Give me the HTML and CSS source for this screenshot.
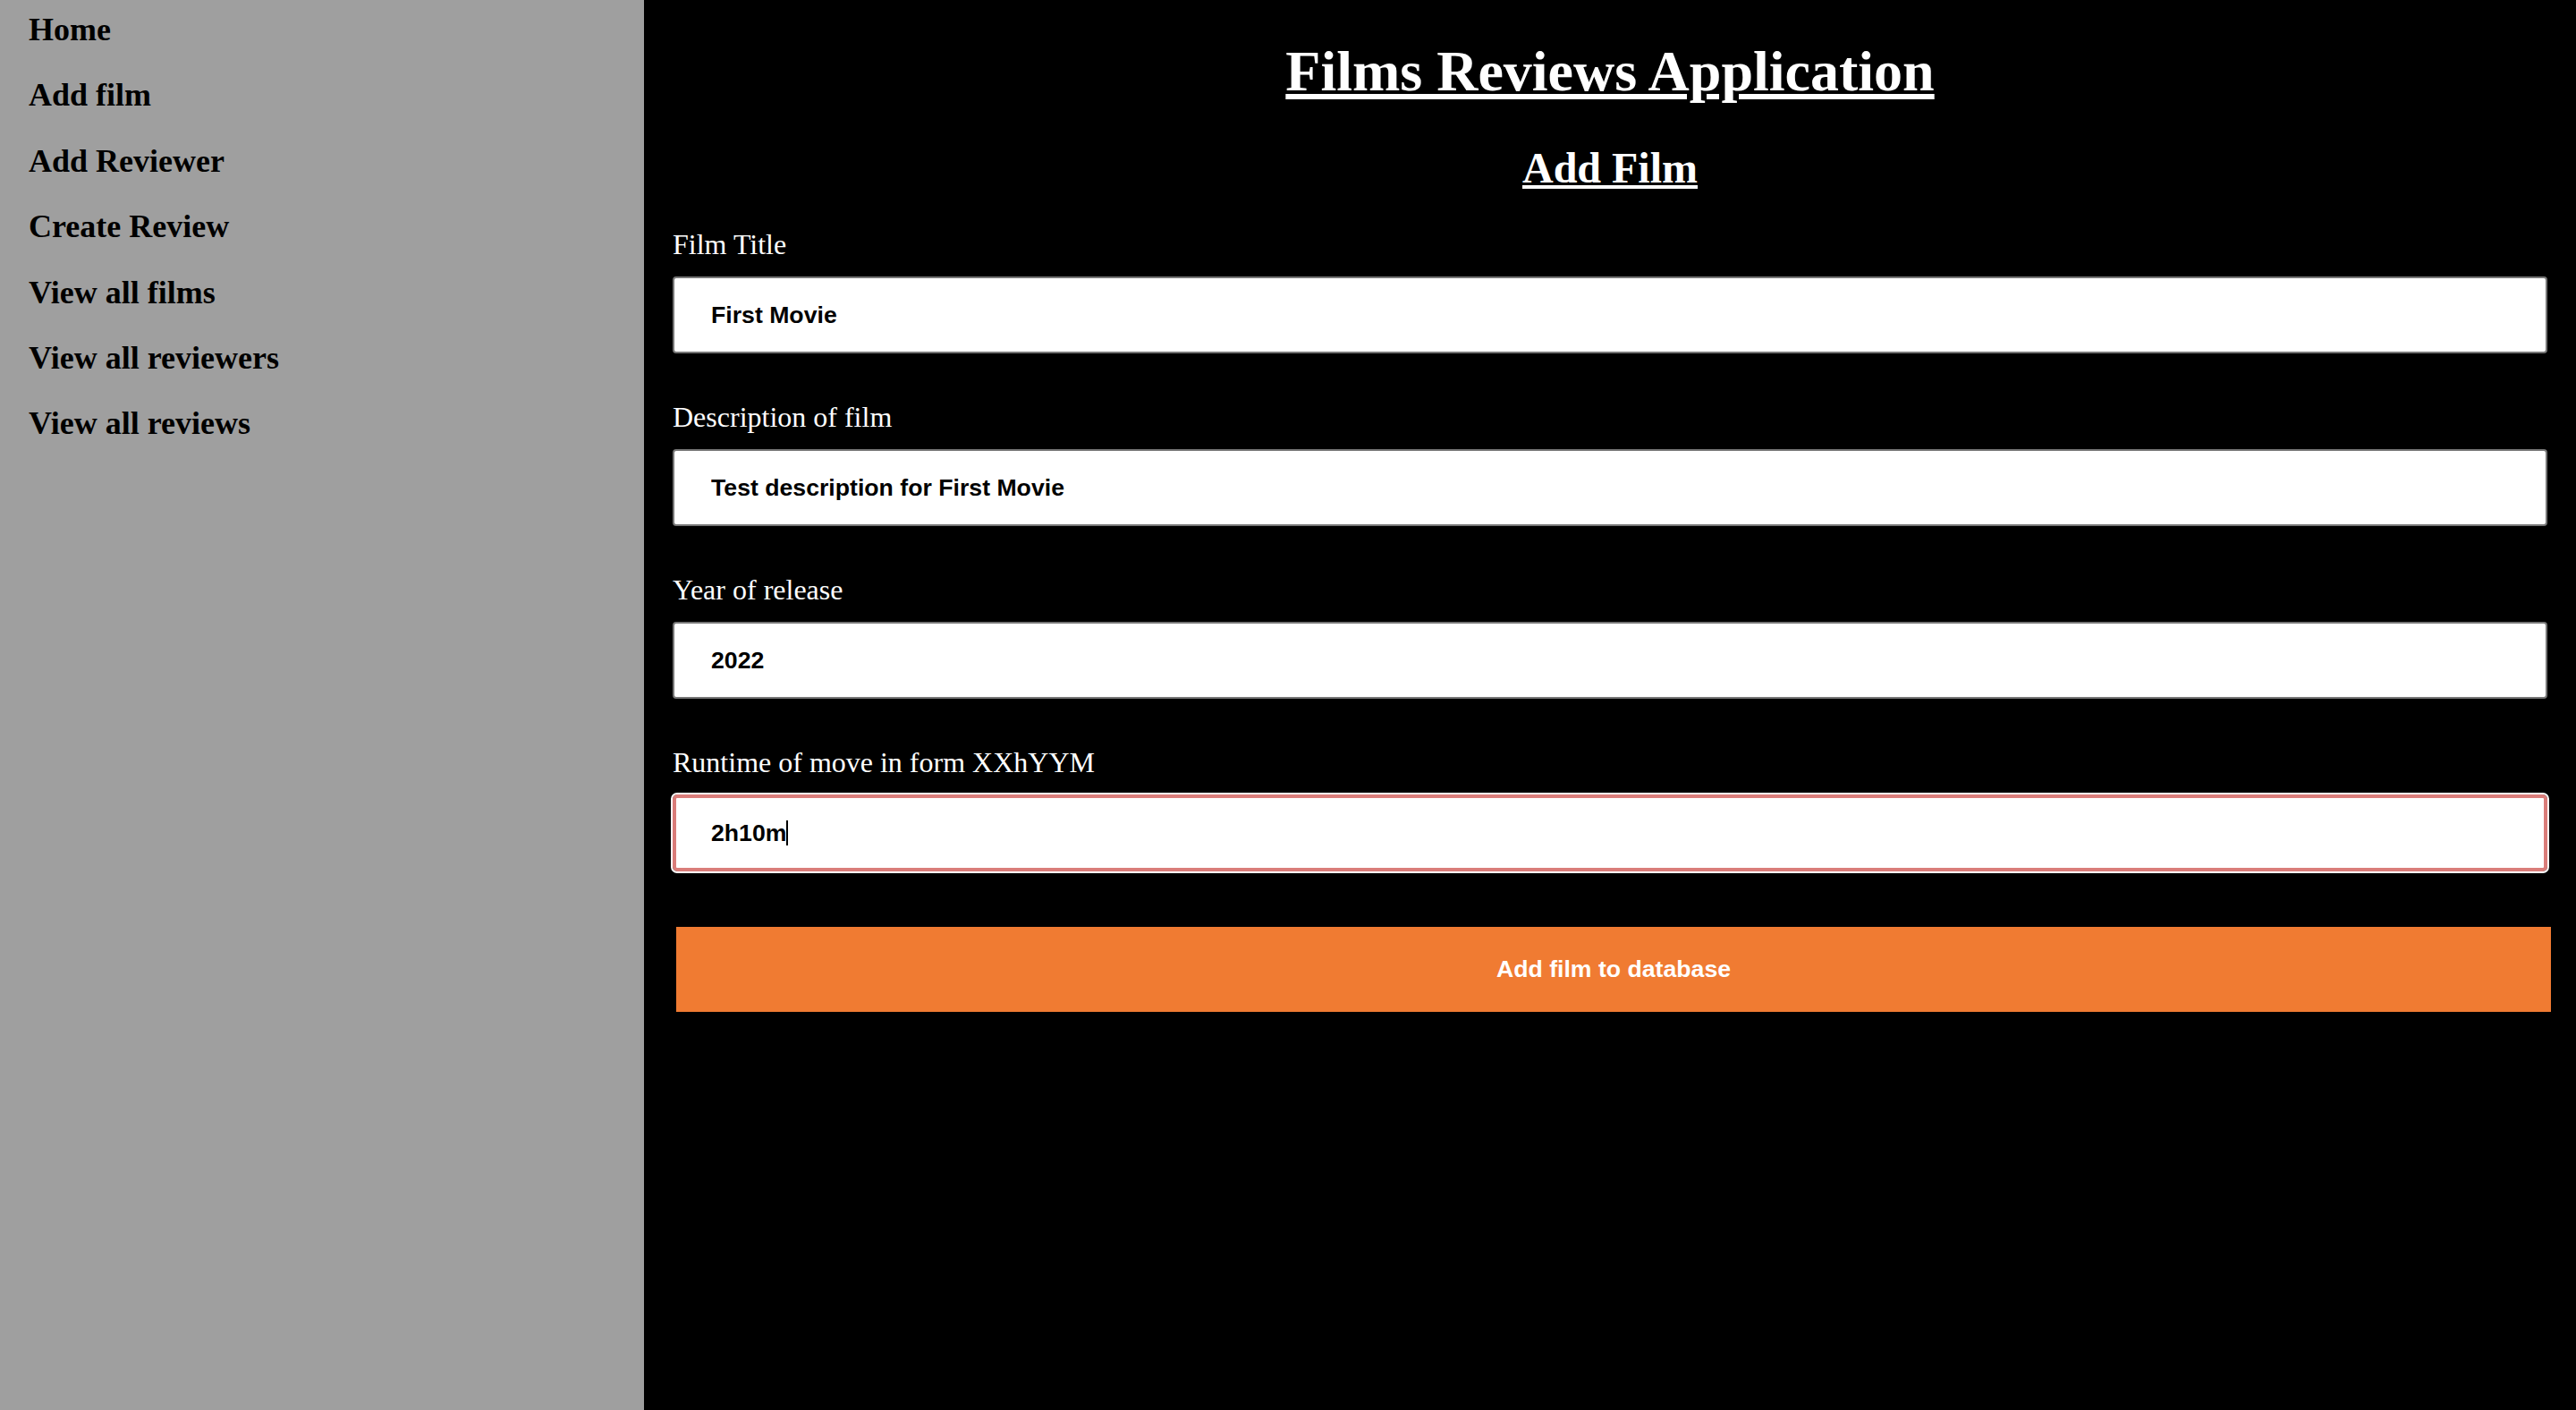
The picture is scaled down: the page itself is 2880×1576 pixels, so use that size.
FILE: index.html
```html
<!DOCTYPE html>
<html lang="en">
<head>
<meta charset="utf-8">
<title>Films Reviews Application - Add Film</title>
<link rel="stylesheet" href="styles.css">
</head>
<body>
<div class="layout">
  <nav class="sidebar">
    <a class="nav-link" href="#">Home</a>
    <a class="nav-link" href="#">Add film</a>
    <a class="nav-link" href="#">Add Reviewer</a>
    <a class="nav-link" href="#">Create Review</a>
    <a class="nav-link" href="#">View all films</a>
    <a class="nav-link" href="#">View all reviewers</a>
    <a class="nav-link" href="#">View all reviews</a>
  </nav>
  <main class="content">
    <h1 class="app-title">Films Reviews Application</h1>
    <h2 class="page-title">Add Film</h2>
    <form class="film-form" onsubmit="return false;">
      <label class="field-label" for="film-title">Film Title</label>
      <input class="field-input" id="film-title" type="text" value="First Movie">

      <label class="field-label" for="film-desc">Description of film</label>
      <input class="field-input" id="film-desc" type="text" value="Test description for First Movie">

      <label class="field-label" for="film-year">Year of release</label>
      <input class="field-input" id="film-year" type="text" value="2022">

      <label class="field-label" for="film-runtime">Runtime of move in form XXhYYM</label>
      <div class="field-wrap">
        <input class="field-input is-focused" id="film-runtime" type="text" value="2h10m">
        <span class="caret"></span>
      </div>

      <button class="submit-btn" type="submit">Add film to database</button>
    </form>
  </main>
</div>
</body>
</html>
```

FILE: styles.css
```css
html, body {
  margin: 0;
  padding: 0;
  height: 100%;
}

body {
  font-family: "Liberation Serif", "Times New Roman", serif;
  background: #000;
}

.layout {
  display: flex;
  height: 100vh;
}

.sidebar {
  width: 720px;
  flex: none;
  background: #9f9f9f;
  display: flex;
  flex-direction: column;
}

.nav-link {
  display: block;
  padding: 13px 16px 19px 32px;
  font-size: 36px;
  line-height: 41.4px;
  font-weight: bold;
  color: #000;
  text-decoration: none;
}

.content {
  flex: 1;
  min-width: 0;
  padding: 0 32px;
  color: #fff;
}

.app-title {
  font-size: 64px;
  font-weight: bold;
  margin: 43px 0;
  text-align: center;
  text-decoration: underline;
}

.page-title {
  font-size: 48px;
  font-weight: bold;
  margin: 40px 0;
  text-align: center;
  text-decoration: underline;
}

.film-form {
  margin: 0;
}

.field-label {
  display: block;
  font-size: 32px;
  line-height: 37px;
  margin-bottom: 17px;
}

.field-input {
  display: block;
  width: 100%;
  height: 86px;
  box-sizing: border-box;
  margin: 0 0 53px;
  padding: 0 41px;
  border: 2px solid #767676;
  border-radius: 4px;
  background: #fff;
  color: #000;
  font-family: "Liberation Sans", Arial, sans-serif;
  font-weight: bold;
  font-size: 26.667px;
  outline: none;
}

.field-wrap {
  position: relative;
  margin-bottom: 62px;
}

.field-wrap .field-input {
  margin: 0;
}

.field-input.is-focused {
  border: 4px solid #da7d7a;
  padding: 0 39px;
  border-radius: 5px;
  outline: 2px solid #fff;
  outline-offset: 0;
}

.caret {
  position: absolute;
  left: 127px;
  top: 29px;
  width: 2px;
  height: 28px;
  background: #000;
}

.submit-btn {
  display: block;
  width: 100%;
  height: 95px;
  margin: 0 0 0 4px;
  padding: 0;
  border: none;
  background: #f07b32;
  color: #fff;
  font-family: "Liberation Sans", Arial, sans-serif;
  font-weight: bold;
  font-size: 26.667px;
  cursor: pointer;
}
```
